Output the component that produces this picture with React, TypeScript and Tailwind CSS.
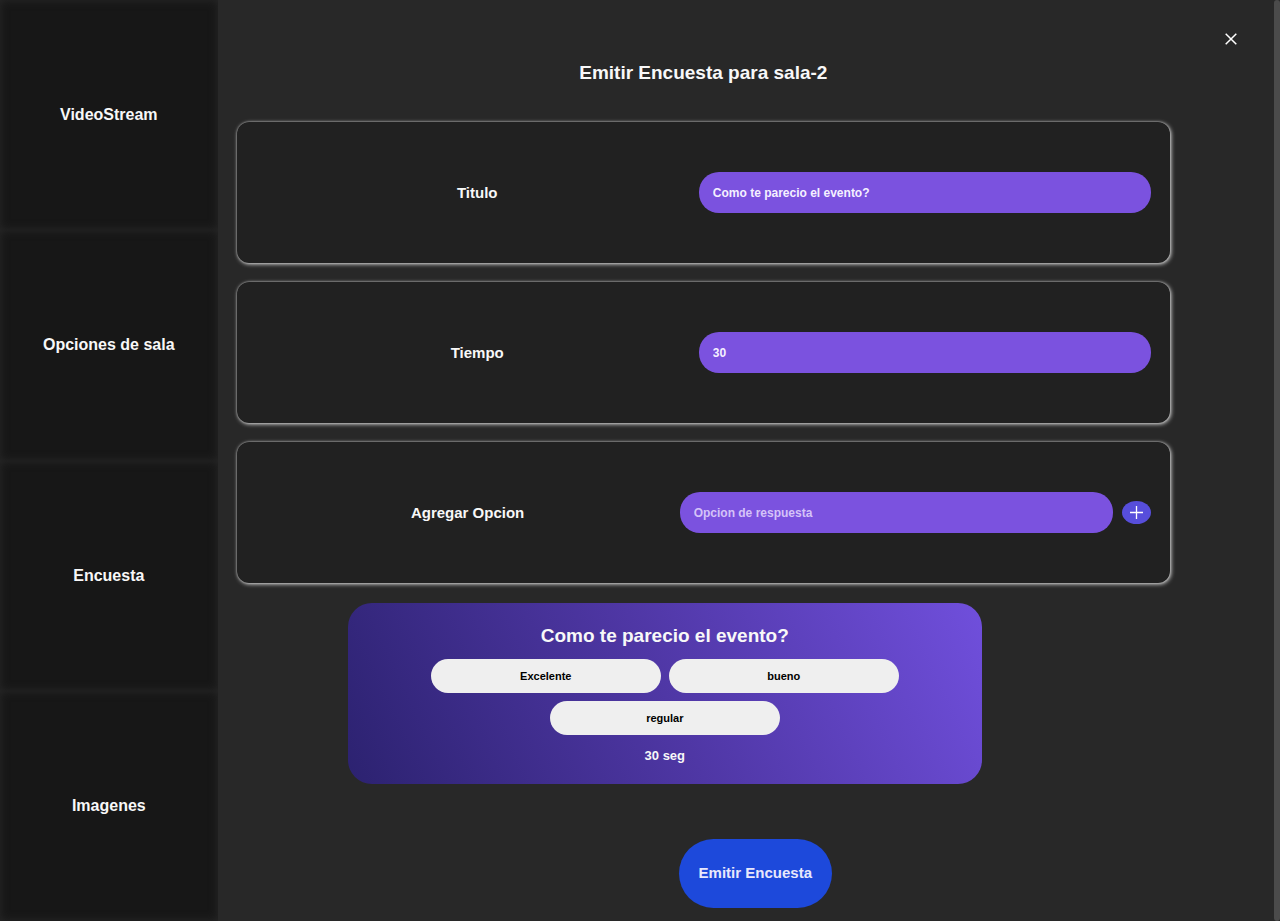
import { useState, type ReactNode } from "react";

const sections = ["VideoStream", "Opciones de sala", "Encuesta", "Imagenes"];

const fieldClass =
  "h-[41px] min-w-0 rounded-[20px] bg-[#7b52df] px-3.5 text-xs font-bold text-[#f5f0ff] outline-none placeholder:text-[#d5c3f8] placeholder:opacity-100";

function Card({ label, htmlFor, children }: { label: string; htmlFor: string; children: ReactNode }) {
  return (
    <div className="flex h-[141px] items-center rounded-xl bg-[#212121] px-[19px] shadow-[1px_1px_4px_#dddddd,0_0_2px_#999999]">
      <label htmlFor={htmlFor} className="flex-1 text-center text-[15px] leading-6 font-bold">
        {label}
      </label>
      {children}
    </div>
  );
}

function Choice({ text }: { text: string }) {
  return (
    <button type="button" className="h-[34px] w-[230px] rounded-full bg-[#efefef] text-[11px] font-bold text-black">
      {text}
    </button>
  );
}

export default function App() {
  const [title, setTitle] = useState("Como te parecio el evento?");
  const [time, setTime] = useState("30");
  const [option, setOption] = useState("");
  const [options, setOptions] = useState(["Excelente", "bueno", "regular"]);

  const addOption = () => {
    if (option.trim()) {
      setOptions([...options, option.trim()]);
      setOption("");
    }
  };

  return (
    <div className="flex min-h-screen bg-[#282828] font-['Liberation_Sans',Arial,sans-serif] text-[#f8f8f8]">
      <nav className="flex w-[17%] shrink-0 flex-col">
        {sections.map((name) => (
          <button
            key={name}
            type="button"
            className="flex-1 bg-[#171717] text-base font-bold shadow-[inset_0_0_10px_#282828]"
          >
            {name}
          </button>
        ))}
      </nav>

      <main className="min-w-0 flex-1 pt-[27px] pb-[13px]">
        <div className="flex justify-end pr-[31px]">
          <button type="button" aria-label="Cerrar" className="flex size-6 items-center justify-center">
            <svg viewBox="0 0 12 12" className="size-3" fill="none" stroke="#fff" strokeWidth="1.5">
              <path d="M.7.7l10.6 10.6M11.3.7.7 11.3" />
            </svg>
          </button>
        </div>

        <div className="pt-2.5 pr-[104px] pl-[19px]">
          <h1 className="text-center text-[19px] leading-6 font-bold">Emitir Encuesta para sala-2</h1>

          <form className="mt-[37px] flex flex-col gap-[19px]" onSubmit={(e) => e.preventDefault()}>
            <Card label="Titulo" htmlFor="titulo">
              <input
                id="titulo"
                className={`${fieldClass} w-[50.5%]`}
                value={title}
                onChange={(e) => setTitle(e.target.value)}
              />
            </Card>
            <Card label="Tiempo" htmlFor="tiempo">
              <input
                id="tiempo"
                className={`${fieldClass} w-[50.5%]`}
                value={time}
                onChange={(e) => setTime(e.target.value)}
              />
            </Card>
            <Card label="Agregar Opcion" htmlFor="opcion">
              <input
                id="opcion"
                className={`${fieldClass} w-[48.4%]`}
                placeholder="Opcion de respuesta"
                value={option}
                onChange={(e) => setOption(e.target.value)}
              />
              <button
                type="button"
                aria-label="Agregar"
                onClick={addOption}
                className="ml-[9px] flex h-[23px] w-[29px] items-center justify-center rounded-[50%] bg-[#574edb]"
              >
                <svg viewBox="0 0 13 13" className="size-[13px]" fill="none" stroke="#fff" strokeWidth="1.3">
                  <path d="M6.5 0v13M0 6.5h13" />
                </svg>
              </button>
            </Card>
          </form>
        </div>

        <div className="mt-5 pr-[181px] pl-[19px]">
          <section className="mx-auto flex w-[74%] flex-col items-center rounded-[24px] bg-linear-[65deg,#2c2270,#4f37a5_50%,#704fdc] pt-[21px] pb-[18px]">
            <h2 className="text-[19px] leading-6 font-bold">{title}</h2>
            <div className="mt-[11px] flex w-[480px] flex-wrap justify-center gap-2">
              {options.map((text) => (
                <Choice key={text} text={text} />
              ))}
            </div>
            <p className="mt-[11px] text-[13px] leading-5 font-bold">{time} seg</p>
          </section>
        </div>

        <div className="mt-[55px] flex justify-center pl-[19px]">
          <button
            type="button"
            className="h-[69px] w-[153px] rounded-[35px] bg-[#1d49db] text-[15px] font-bold text-[#e8e8fc]"
          >
            Emitir Encuesta
          </button>
        </div>
      </main>
      <div className="w-1.5 shrink-0 rounded-full bg-[#4b4b4b]" />
    </div>
  );
}
